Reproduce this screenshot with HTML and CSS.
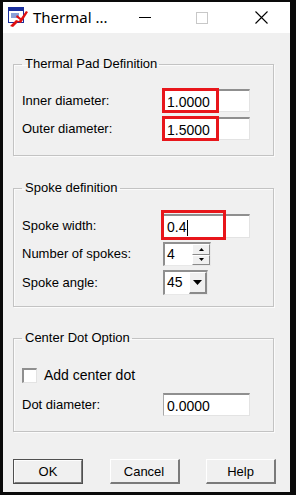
FILE: index.html
```html
<!DOCTYPE html>
<html>
<head>
<meta charset="utf-8">
<link rel="stylesheet" href="styles.css">
</head>
<body>
<div class="win">
  <div class="titlebar">
    <svg class="appicon" width="20" height="20" viewBox="0 0 20 20">
      <rect x="0.5" y="0.5" width="15" height="15" fill="#fff" stroke="#1a2f9e"/>
      <rect x="1" y="1" width="14" height="3" fill="#1a2f9e"/>
      <rect x="3" y="6" width="8" height="5" fill="#8aa0d8"/>
      <path d="M2 19 L8 13 L11 14 L18 4 L20 5 L13 16 L10 15 L5 20 Z" fill="#e01010"/>
      <path d="M9 8 L14 12 L12 13 L8 10 Z" fill="#e01010"/>
    </svg>
    <span class="title">Thermal ...</span>
    <div class="caption-btns">
      <span class="cap min"><svg width="12" height="2"><rect width="12" height="1" fill="#000"/></svg></span>
      <span class="cap max"><svg width="12" height="12"><rect x="0.5" y="0.5" width="11" height="11" fill="none" stroke="#c8c8c8"/></svg></span>
      <span class="cap close"><svg width="13" height="13"><path d="M0.5 0.5 L12.5 12.5 M12.5 0.5 L0.5 12.5" stroke="#000" stroke-width="1.1"/></svg></span>
    </div>
  </div>
  <div class="content">
    <fieldset class="group g1">
      <legend>Thermal Pad Definition</legend>
      <div class="rows">
        <label class="lbl">Inner diameter:</label>
        <div class="ctl"><div class="edit">1.0000</div><span class="mark m1"></span></div>
        <label class="lbl">Outer diameter:</label>
        <div class="ctl"><div class="edit">1.5000</div><span class="mark m1"></span></div>
      </div>
    </fieldset>

    <fieldset class="group g2">
      <legend>Spoke definition</legend>
      <div class="rows rows2">
        <label class="lbl">Spoke width:</label>
        <div class="ctl"><div class="edit">0.4<span class="caret"></span></div><span class="mark m2"></span></div>
        <label class="lbl">Number of spokes:</label>
        <div class="ctl">
          <div class="spin">
            <div class="spin-text">4</div>
            <div class="spin-btns">
              <span class="sbtn"><svg width="5" height="3"><path d="M2.5 0 L5 3 L0 3 Z" fill="#000"/></svg></span>
              <span class="sbtn"><svg width="5" height="3"><path d="M0 0 L5 0 L2.5 3 Z" fill="#000"/></svg></span>
            </div>
          </div>
        </div>
        <label class="lbl">Spoke angle:</label>
        <div class="ctl">
          <div class="combo">
            <div class="combo-text">45</div>
            <span class="cbtn"><svg width="9" height="5"><path d="M0 0 L9 0 L4.5 5 Z" fill="#000"/></svg></span>
          </div>
        </div>
      </div>
    </fieldset>

    <fieldset class="group g3">
      <legend>Center Dot Option</legend>
      <div class="checkrow">
        <span class="check"></span>
        <span class="checklbl">Add center dot</span>
      </div>
      <div class="rows">
        <label class="lbl">Dot diameter:</label>
        <div class="ctl"><div class="edit">0.0000</div></div>
      </div>
    </fieldset>

    <div class="buttons">
      <button class="btn def">OK</button>
      <button class="btn">Cancel</button>
      <button class="btn">Help</button>
    </div>
  </div>
</div>
</body>
</html>
```
FILE: styles.css
```css
html, body {
  margin: 0;
  padding: 0;
  background: #0a0a0a;
  width: 296px;
  height: 495px;
  overflow: hidden;
}
.win {
  margin: 2px 0 0 3px;
  width: 287px;
  height: 490px;
  display: flex;
  flex-direction: column;
  font-family: "Liberation Sans", Arial, sans-serif;
  font-size: 13px;
  color: #000;
}
.titlebar {
  height: 31px;
  background: #fff;
  display: flex;
  align-items: center;
  flex: none;
}
.appicon {
  margin-left: 5px;
  margin-top: -1px;
}
.title {
  font-family: "Noto Sans", "Open Sans", sans-serif;
  font-size: 15px;
  margin-left: 5px;
  margin-top: -1px;
  color: #000;
}
.caption-btns {
  margin-left: auto;
  display: flex;
  align-items: center;
  height: 31px;
}
.cap {
  display: flex;
  align-items: center;
  justify-content: center;
  height: 31px;
}
.cap.min { width: 12px; margin-right: 45px; }
.cap.max { width: 12px; margin-right: 47px; }
.cap.close { width: 13px; margin-right: 22px; }

.content {
  flex: 1;
  background: #f0f0f0;
  padding: 23px 16px 0 10px;
  display: flex;
  flex-direction: column;
}
.group {
  margin: 0;
  border: 1px solid #c3c3c3;
  box-shadow: inset 1px 1px 0 #fbfbfb, 1px 1px 0 #fbfbfb;
  padding: 0 8px;
  min-width: 0;
}
.group legend {
  padding: 0 2px 0 3px;
  margin-left: 0;
  line-height: 16px;
  height: 16px;
  color: #000;
}
.g1 { padding-top: 17px; padding-bottom: 15px; }
.g2 { margin-top: 24px; padding-top: 18px; padding-bottom: 11px; }
.g3 { margin-top: 23px; padding-top: 19px; padding-bottom: 15px; }

.rows {
  display: grid;
  grid-template-columns: 141px 1fr;
  row-gap: 5px;
  align-items: center;
}
.rows2 { row-gap: 4px; }
.lbl { line-height: 16px; }
.ctl { position: relative; display: flex; }

.edit {
  box-sizing: border-box;
  width: 87px;
  height: 23px;
  background: #fff;
  border-top: 2px solid #8f8f8f;
  border-left: 1px solid #a9a9a9;
  border-right: 1px solid #e3e3e3;
  border-bottom: 1px solid #e3e3e3;
  padding: 2px 0 0 3px;
  font-size: 14px;
  line-height: 17px;
  display: flex;
  align-items: center;
}
.rows2 .edit { height: 24px; }
.caret {
  display: inline-block;
  width: 1px;
  height: 16px;
  background: #000;
  margin-left: 1px;
}
.mark {
  position: absolute;
  left: -1px;
  top: -1px;
  border: 3px solid #e8161b;
  box-sizing: border-box;
}
.m1 { width: 57px; height: 25px; }
.m2 { width: 65px; height: 30px; top: -4px; left: -2px; }

.spin {
  box-sizing: border-box;
  width: 48px;
  height: 24px;
  display: flex;
  border-top: 2px solid #8f8f8f;
  border-left: 2px solid #8f8f8f;
  border-right: 1px solid #e8e8e8;
  border-bottom: 1px solid #e8e8e8;
  background: #fff;
}
.spin-text {
  flex: 1;
  padding-left: 2px;
  font-size: 14px;
  line-height: 20px;
}
.spin-btns {
  width: 18px;
  display: flex;
  flex-direction: column;
  background: #f0f0f0;
}
.sbtn {
  flex: 1;
  display: flex;
  align-items: center;
  justify-content: center;
  box-sizing: border-box;
  border-top: 1px solid #fff;
  border-left: 1px solid #fff;
  border-right: 1px solid #8a8a8a;
  border-bottom: 1px solid #8a8a8a;
}
.combo {
  box-sizing: border-box;
  width: 45px;
  height: 25px;
  display: flex;
  border-top: 2px solid #8f8f8f;
  border-left: 2px solid #8f8f8f;
  border-right: 1px solid #e8e8e8;
  border-bottom: 1px solid #e8e8e8;
  background: #fff;
}
.combo-text {
  flex: 1;
  padding-left: 2px;
  font-size: 14px;
  line-height: 21px;
}
.cbtn {
  width: 18px;
  display: flex;
  align-items: center;
  justify-content: center;
  background: #f0f0f0;
  box-sizing: border-box;
  border-top: 1px solid #fff;
  border-left: 1px solid #fff;
  border-right: 2px solid #8a8a8a;
  border-bottom: 2px solid #8a8a8a;
}

.checkrow {
  display: flex;
  align-items: center;
  height: 20px;
  margin-bottom: 8px;
}
.check {
  box-sizing: border-box;
  width: 15px;
  height: 15px;
  background: #fff;
  border-top: 2px solid #8f8f8f;
  border-left: 2px solid #8f8f8f;
  border-right: 1px solid #e3e3e3;
  border-bottom: 1px solid #e3e3e3;
}
.checklbl {
  margin-left: 7px;
  font-size: 14px;
}

.buttons {
  display: flex;
  justify-content: space-between;
  margin-top: 27px;
  margin-right: -2px;
}
.btn {
  box-sizing: border-box;
  width: 70px;
  height: 25px;
  margin: 0;
  padding: 0;
  font-family: "Liberation Sans", Arial, sans-serif;
  font-size: 13px;
  color: #000;
  background: #f0f0f0;
  border-top: 1px solid #fff;
  border-left: 1px solid #fff;
  border-right: 2px solid #7a7a7a;
  border-bottom: 2px solid #7a7a7a;
}
.btn.def {
  outline: 1px solid #505050;
  outline-offset: -1px;
  border-top: 2px solid #fdfdfd;
  border-left: 2px solid #fdfdfd;
}
```
